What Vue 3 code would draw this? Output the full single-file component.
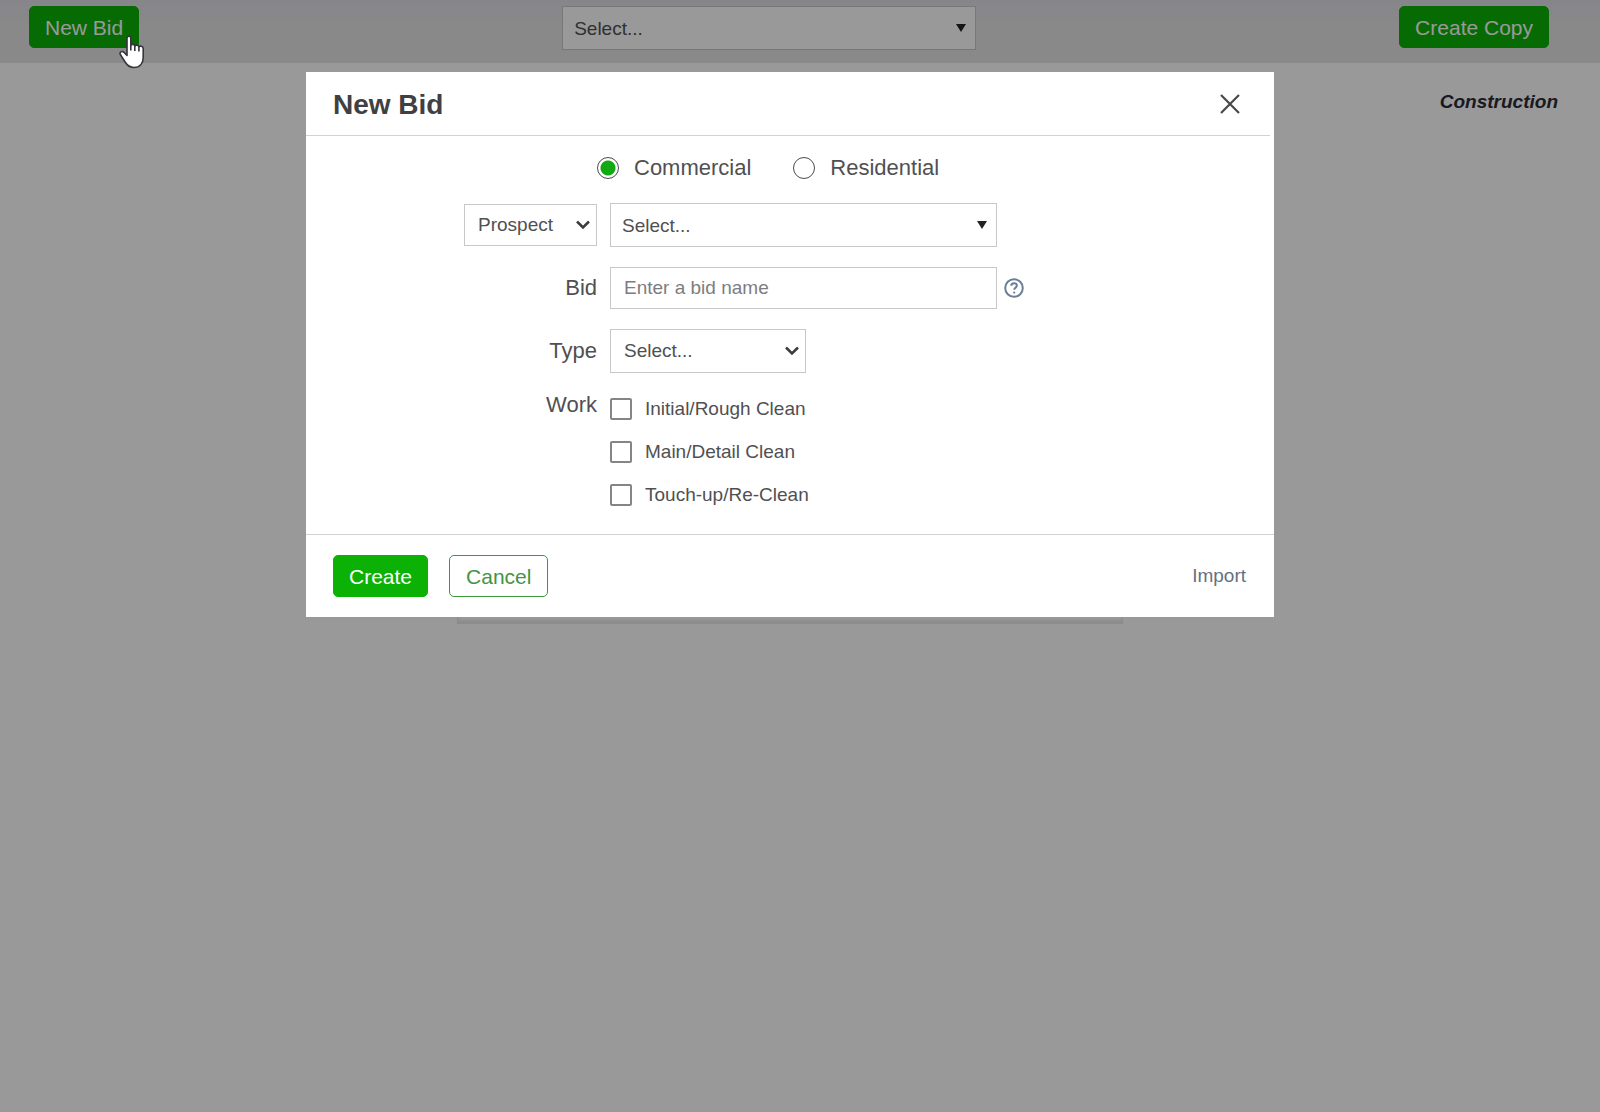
<script setup>
import { ref } from 'vue'

const bid = ref('')
const segment = ref('commercial')
const source = ref('Prospect')
const workTypes = ref([
  { id: 'initial', label: 'Initial/Rough Clean', checked: false },
  { id: 'main', label: 'Main/Detail Clean', checked: false },
  { id: 'touchup', label: 'Touch-up/Re-Clean', checked: false },
])
</script>

<template>
  <div class="page">
    <header class="topbar">
      <button type="button" class="btn btn-primary">New Bid</button>
      <div class="select-wrap bid-picker">
        <select class="control tall combo" aria-label="Bid">
          <option>Select...</option>
        </select>
        <svg class="triangle" viewBox="0 0 10 8" aria-hidden="true"><path d="M0 0h10L5 8z" /></svg>
      </div>
      <button type="button" class="btn btn-primary">Create Copy</button>
    </header>
    <main class="content">
      <p class="module">Construction</p>
      <div class="card"></div>
    </main>

    <div class="backdrop">
      <section class="modal" role="dialog" aria-labelledby="modal-title">
        <header class="modal-head">
          <h1 id="modal-title">New Bid</h1>
          <button type="button" class="close" aria-label="Close">
            <svg viewBox="0 0 20 20" aria-hidden="true"><path d="M1 1l18 18M19 1L1 19" /></svg>
          </button>
        </header>

        <form class="modal-body" @submit.prevent>
          <div class="radios">
            <label><input v-model="segment" type="radio" name="segment" value="commercial" />Commercial</label>
            <label><input v-model="segment" type="radio" name="segment" value="residential" />Residential</label>
          </div>

          <div class="row">
            <div class="row-label">
              <div class="select-wrap source">
                <select v-model="source" class="control" aria-label="Account type">
                  <option>Prospect</option>
                </select>
                <svg class="chevron" viewBox="0 0 14 9" aria-hidden="true"><path d="M1 1l6 6 6-6" /></svg>
              </div>
            </div>
            <div class="select-wrap wide">
              <select class="control tall combo" aria-label="Prospect">
                <option>Select...</option>
              </select>
              <svg class="triangle" viewBox="0 0 10 8" aria-hidden="true"><path d="M0 0h10L5 8z" /></svg>
            </div>
          </div>

          <div class="row">
            <label class="row-label" for="bid-name">Bid</label>
            <div class="with-help">
              <input id="bid-name" v-model="bid" class="control wide" type="text" placeholder="Enter a bid name" />
              <svg class="help" viewBox="0 0 20 20" role="img" aria-label="Help">
                <circle cx="10" cy="10" r="8.8" />
                <path d="M7.2 7.8c0-3.6 5.7-3.4 5.7-.2 0 2-2.7 2-2.7 4.2" />
                <circle class="dot" cx="10.2" cy="14.6" r="1.1" />
              </svg>
            </div>
          </div>

          <div class="row">
            <label class="row-label" for="bid-type">Type</label>
            <div class="select-wrap type">
              <select id="bid-type" class="control tall">
                <option>Select...</option>
              </select>
              <svg class="chevron" viewBox="0 0 14 9" aria-hidden="true"><path d="M1 1l6 6 6-6" /></svg>
            </div>
          </div>

          <div class="row work" role="group" aria-labelledby="work-label">
            <span id="work-label" class="row-label">Work</span>
            <div class="checks">
              <label v-for="item in workTypes" :key="item.id">
                <input v-model="item.checked" type="checkbox" />{{ item.label }}
              </label>
            </div>
          </div>
        </form>

        <footer class="modal-foot">
          <button type="button" class="btn btn-primary">Create</button>
          <button type="button" class="btn btn-outline">Cancel</button>
          <a class="import" href="#">Import</a>
        </footer>
      </section>
    </div>

    <svg class="pointer" viewBox="0 0 26 34" aria-hidden="true">
      <path
        d="M8 3.200C8 .6 11.800.6 11.800 3.200V10.500c.5-1.600 3.800-1.400 4 .5.700-1.400 3.900-1.200 4.100.8.800-1.200 4.300-.9 4.300 1.800v8.600c0 6-3.300 10.300-9.200 10.300-4.600 0-6.700-2-8.900-5.500L1.500 19.800c-1.500-2.700 1.500-4.300 3.400-2.500L8 20.400z"
      />
      <path class="joints" d="M11.800 10.500v5M15.800 11v5M19.900 11.800v4.600" />
    </svg>
  </div>
</template>

<style>
body {
  margin: 0;
}
</style>

<style scoped>
* {
  box-sizing: border-box;
}
.page {
  position: relative;
  min-height: 100vh;
  background: #fff;
  color: #505052;
  font: 19px/24px "Liberation Sans", Arial, sans-serif;
}
.topbar {
  display: flex;
  justify-content: space-between;
  align-items: flex-start;
  height: 63px;
  padding: 6px 51px 0 29px;
  background: linear-gradient(#e0e0e6, #e5e5e5 30px);
}
.btn {
  height: 42px;
  padding: 1px 15px 0;
  border: 1px solid #0bb205;
  border-radius: 5px;
  font: 21px/24px "Liberation Sans", Arial, sans-serif;
}
.btn-primary {
  background: #0bb205;
  color: #fff;
}
.btn-outline {
  padding: 1px 16px 0;
  background: #fff;
  border-color: #3c9a3c;
  color: #459345;
}
.content {
  display: flex;
  flex-direction: column;
  align-items: center;
  padding: 27px 20px 0 0;
}
.module {
  align-self: flex-end;
  margin: 0 22px 0 0;
  color: #2b2b38;
  font-weight: bold;
  font-style: italic;
}
.card {
  width: 666px;
  height: 510px;
  border: 1px solid #eaeaea;
  box-shadow: inset 0 -3px 3px #eaeaea;
}
.backdrop {
  position: absolute;
  inset: 0;
  display: flex;
  justify-content: center;
  align-items: flex-start;
  padding: 72px 20px 0 0;
  background: rgba(0, 0, 0, 0.4);
}
.modal {
  width: 100%;
  max-width: 968px;
  background: #fff;
}
.modal-head {
  display: flex;
  justify-content: space-between;
  align-items: center;
  height: 64px;
  margin-right: 4px;
  padding: 0 30px 0 27px;
  border-bottom: 1px solid #d2d2d2;
}
h1 {
  margin: 0;
  padding-top: 3px;
  color: #404042;
  font-size: 28px;
  line-height: 32px;
}
.close {
  display: flex;
  padding: 0;
  border: 0;
  background: none;
}
.close svg {
  width: 20px;
  height: 20px;
  fill: none;
  stroke: #48484a;
  stroke-width: 2.2;
}
.modal-body {
  display: flex;
  flex-direction: column;
  gap: 20px;
  padding: 17px 0 27px;
}
.radios {
  display: flex;
  gap: 42px;
  padding-left: 291px;
  height: 30px;
  font-size: 22px;
}
.radios label,
.checks label {
  display: flex;
  align-items: center;
}
.radios input {
  appearance: none;
  width: 22px;
  height: 22px;
  margin: 0 15px 0 0;
  border: 1px solid #4c4c4c;
  border-radius: 50%;
}
.radios input:checked {
  background: radial-gradient(circle, #12a912 7px, #fff 8px);
}
.row {
  display: grid;
  grid-template-columns: 291px 1fr;
  column-gap: 13px;
  align-items: center;
}
.row-label {
  justify-self: end;
  font-size: 22px;
}
.select-wrap {
  position: relative;
}
.bid-picker {
  width: 414px;
}
.wide {
  width: 387px;
}
.source {
  width: 133px;
}
.type {
  width: 196px;
}
.control {
  display: block;
  appearance: none;
  height: 42px;
  padding: 0 13px;
  border: 1px solid #c8c8c8;
  border-radius: 0;
  background: #fff;
  color: #505052;
  font: 19px/24px "Liberation Sans", Arial, sans-serif;
}
.select-wrap .control {
  width: 100%;
}
.control.tall {
  height: 44px;
}
.control.combo {
  padding: 2px 11px 0;
}
.control::placeholder {
  color: #7d7d7f;
  opacity: 1;
}
.triangle,
.chevron {
  position: absolute;
  top: 50%;
  transform: translateY(-50%);
  pointer-events: none;
}
.triangle {
  right: 10px;
  width: 10px;
  height: 8px;
  fill: #222;
}
.chevron {
  right: 7px;
  width: 14px;
  height: 9px;
  fill: none;
  stroke: #3c3c3e;
  stroke-width: 2.5;
}
.with-help {
  display: flex;
  align-items: center;
  gap: 7px;
}
.help {
  width: 20px;
  height: 20px;
  fill: none;
  stroke: #6d7f98;
  stroke-width: 2;
}
.help .dot {
  fill: #6d7f98;
  stroke: none;
}
.work {
  align-items: start;
}
.checks {
  display: flex;
  flex-direction: column;
  gap: 19px;
  padding-top: 4px;
}
.checks input {
  appearance: none;
  width: 22px;
  height: 22px;
  margin: 0 13px 0 0;
  border: 2px solid #858585;
  border-radius: 2px;
}
.modal-foot {
  display: flex;
  align-items: center;
  gap: 21px;
  height: 83px;
  padding: 0 28px 0 27px;
  border-top: 1px solid #d2d2d2;
}
.import {
  margin-left: auto;
  color: #66707f;
  text-decoration: none;
}
.pointer {
  position: absolute;
  top: 35px;
  left: 119px;
  width: 26px;
  height: 34px;
  fill: #fff;
  stroke: #37333c;
  stroke-width: 1.6;
  stroke-linejoin: round;
}
.pointer .joints {
  fill: none;
}
</style>
